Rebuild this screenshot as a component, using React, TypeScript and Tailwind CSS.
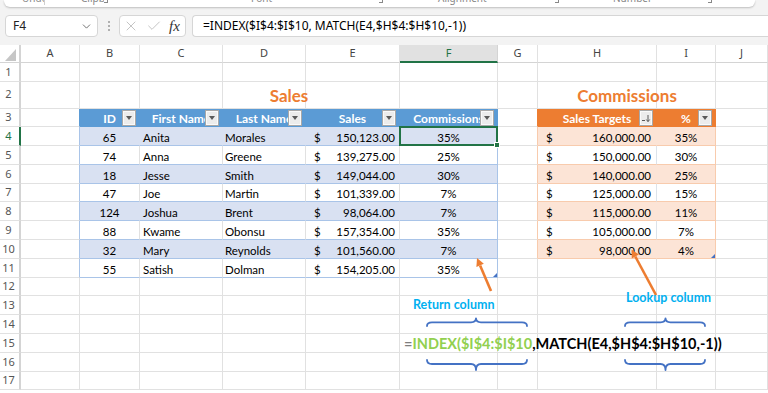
import React from "react";
import { X, Check, ChevronDown } from "lucide-react";

const LETTERS = ["", "A", "B", "C", "D", "E", "F", "G", "H", "I", "J"];
const LEFT: string[][] = [
  ["65", "Anita", "Morales", "150,123.00", "35%"],
  ["74", "Anna", "Greene", "139,275.00", "25%"],
  ["18", "Jesse", "Smith", "149,044.00", "30%"],
  ["47", "Joe", "Martin", "101,339.00", "7%"],
  ["124", "Joshua", "Brent", "98,064.00", "7%"],
  ["88", "Kwame", "Obonsu", "157,354.00", "35%"],
  ["32", "Mary", "Reynolds", "101,560.00", "7%"],
  ["55", "Satish", "Dolman", "154,205.00", "35%"],
];
const RIGHT: string[][] = [
  ["160,000.00", "35%"],
  ["150,000.00", "30%"],
  ["140,000.00", "25%"],
  ["125,000.00", "15%"],
  ["115,000.00", "11%"],
  ["105,000.00", "7%"],
  ["98,000.00", "4%"],
];
const LEFT_HDR = ["ID", "First Name", "Last Name", "Sales", "Commissions"];

function FilterBtn({ sort = false }: { sort?: boolean }) {
  return (
    <div className="absolute right-[4px] top-[2px] w-[12px] h-[14px] bg-[#ececec] border border-[#fafafa] shadow-[0_0_0_1px_#a8a8a8] flex items-center justify-center z-10">
      {sort ? (
        <svg width="10" height="10" viewBox="0 0 10 10">
          <line x1="1" y1="7.5" x2="4" y2="7.5" stroke="#595959" strokeWidth="1" />
          <line x1="7" y1="2" x2="7" y2="8.5" stroke="#595959" strokeWidth="1" />
          <path d="M5.3 6.5 L7 8.6 L8.7 6.5" fill="none" stroke="#595959" strokeWidth="1" />
        </svg>
      ) : (
        <div className="w-0 h-0 border-l-[3.5px] border-r-[3.5px] border-t-[4px] border-l-transparent border-r-transparent border-t-[#5a5a5a]" />
      )}
    </div>
  );
}

function Cell({ r, c }: { r: number; c: number }) {
  if (r === 0) {
    if (c === 0)
      return (
        <div className="flex items-end justify-end pr-[3px] pb-[1px] bg-white border-r-2 border-r-[#d4d4d4] border-b border-b-[#d4d4d4]">
          <div className="w-0 h-0 border-l-[11px] border-l-transparent border-b-[12px] border-b-[#c6c6c6]" />
        </div>
      );
    if (c === 6)
      return (
        <div className="flex items-center justify-center bg-[#e1e1e1] border-r border-r-[#d4d4d4] border-b-2 border-b-[#217346] text-[#217346] text-[11px] font-['Noto_Sans',sans-serif]">
          F
        </div>
      );
    return (
      <div className="flex items-center justify-center bg-white border-r border-r-[#e1e1e1] border-b border-b-[#d4d4d4] text-[#444] text-[11px] font-['Noto_Sans',sans-serif]">
        {LETTERS[c]}
      </div>
    );
  }
  if (c === 0) {
    if (r === 4)
      return (
        <div className="flex items-center justify-center pr-[2px] bg-white border-r-2 border-r-[#217346] border-b border-b-[#e1e1e1] text-[#217346] text-[11px] font-['Noto_Sans',sans-serif]">
          {r}
        </div>
      );
    return (
      <div className="flex items-center justify-center pr-[2px] bg-white border-r-2 border-r-[#d4d4d4] border-b border-b-[#e1e1e1] text-[#555] text-[11px] font-['Noto_Sans',sans-serif]">
        {r}
      </div>
    );
  }

  const hdrL = r === 3 && c >= 2 && c <= 6;
  const inL = r >= 4 && r <= 11 && c >= 2 && c <= 6;
  const hdrR = r === 3 && (c === 8 || c === 9);
  const inR = r >= 4 && r <= 10 && (c === 8 || c === 9);
  const band = r % 2 === 0;

  let bg = "bg-white";
  let br = "border-r-[#e1e1e1]";
  let bb = "border-b-[#e1e1e1]";
  let content: React.ReactNode = null;
  let extra: React.ReactNode = null;
  let txt = "text-black text-[11.5px]";

  if (hdrL) {
    bg = "bg-[#5b9bd5]";
    br = "border-r-[#5b9bd5]";
    bb = "border-b-[#5b9bd5]";
    txt = "text-white font-bold text-[12px]";
    content = <span className="w-full text-center">{LEFT_HDR[c - 2]}</span>;
    extra = <FilterBtn />;
  } else if (inL) {
    bg = band ? "bg-[#d9e1f2]" : "bg-white";
    bb = "border-b-[#a9c4e8]";
    br = c === 6 ? "border-r-[#a9c4e8]" : band ? "border-r-[#d9e1f2]" : "border-r-[#e1e1e1]";
    const row = LEFT[r - 4];
    if (c === 2) content = <span className="w-full text-center">{row[0]}</span>;
    if (c === 3) content = <span className="pl-[3px]">{row[1]}</span>;
    if (c === 4) content = <span className="pl-[2px]">{row[2]}</span>;
    if (c === 5)
      content = (
        <div className="w-full flex justify-between pl-[8px] pr-[4px]">
          <span>$</span>
          <span>{row[3]}</span>
        </div>
      );
    if (c === 6) content = <span className="w-full text-center">{row[4]}</span>;
    if (c === 6 && r === 4)
      extra = (
        <>
          <div className="absolute -left-[1px] -top-[1px] -right-[1px] -bottom-[1px] border-2 border-[#217346] z-20" />
          <div className="absolute -right-[3px] -bottom-[3px] w-[6px] h-[6px] bg-[#217346] border border-white z-30" />
        </>
      );
    if (c === 6 && r === 11)
      extra = (
        <div className="absolute right-0 bottom-0 w-0 h-0 border-l-[4px] border-l-transparent border-b-[4px] border-b-[#4472c4]" />
      );
  } else if (hdrR) {
    bg = "bg-[#ed7d31]";
    br = "border-r-[#ed7d31]";
    bb = "border-b-[#ed7d31]";
    txt = "text-white font-bold text-[12px]";
    content = <span className="w-full text-center">{c === 8 ? "Sales Targets" : "%"}</span>;
    extra = <FilterBtn sort={c === 8} />;
  } else if (inR) {
    bg = band ? "bg-[#fce4d6]" : "bg-white";
    bb = "border-b-[#f8cbad]";
    br = c === 9 ? "border-r-[#f8cbad]" : band ? "border-r-[#fce4d6]" : "border-r-[#dde3ea]";
    const row = RIGHT[r - 4];
    if (c === 8)
      content = (
        <div className="w-full flex justify-between pl-[8px] pr-[5px]">
          <span>$</span>
          <span>{row[0]}</span>
        </div>
      );
    if (c === 9) content = <span className="w-full text-center">{row[1]}</span>;
    if (c === 9 && r === 10)
      extra = (
        <div className="absolute right-0 bottom-0 w-0 h-0 border-l-[4px] border-l-transparent border-b-[4px] border-b-[#4472c4]" />
      );
  }

  if (c === 1 && r === 3) br = "border-r-[#5b9bd5]";
  if (c === 1 && r >= 4 && r <= 11) br = "border-r-[#a9c4e8]";
  if (c === 7 && r === 3) br = "border-r-[#ed7d31]";
  if (c === 7 && r >= 4 && r <= 10) br = "border-r-[#f8cbad]";

  if (r === 2 && c === 2)
    content = (
      <div className="relative z-10 shrink-0 w-[418px] text-center text-[17px] leading-[20px] font-bold text-[#ed7d31] pb-[2px]">
        Sales
      </div>
    );
  if (r === 2 && c === 8)
    content = (
      <div className="relative z-10 shrink-0 w-[178px] text-center text-[17px] leading-[20px] font-bold text-[#ed7d31] pb-[2px]">
        Commissions
      </div>
    );

  return (
    <div
      className={`relative flex items-end min-w-0 border-r border-b leading-[14px] whitespace-nowrap ${bg} ${br} ${bb} ${txt}`}
    >
      {content}
      {extra}
    </div>
  );
}

function Brace({ x1, x2, xm, up }: { x1: number; x2: number; xm: number; up: boolean }) {
  const ye = up ? 326 : 360;
  const yf = up ? 322.3 : 364;
  const yt = up ? 318.3 : 370;
  const d = `M ${x1} ${ye} Q ${x1} ${yf} ${x1 + 5} ${yf} L ${xm - 5} ${yf} Q ${xm} ${yf} ${xm} ${yt} Q ${xm} ${yf} ${xm + 5} ${yf} L ${x2 - 5} ${yf} Q ${x2} ${yf} ${x2} ${ye}`;
  return <path d={d} fill="none" stroke="#4472c4" strokeWidth="1.8" strokeLinecap="round" strokeLinejoin="round" />;
}

export default function App() {
  const rows = Array.from({ length: 18 }, (_, i) => i);
  const cols = Array.from({ length: 11 }, (_, i) => i);
  return (
    <div className="relative w-[768px] h-[393px] overflow-hidden bg-white font-[Lato,sans-serif]">
      {/* top ribbon + formula bar */}
      <div className="h-[45px] bg-[#f3f3f3] flex flex-col font-['Noto_Sans',sans-serif]">
        <div className="ml-[4px] w-[751px] h-[7px] bg-white rounded-b-[6px] shadow-[0_1px_2px_rgba(0,0,0,0.22)] overflow-hidden flex text-[10px] leading-[12px] text-[#888]">
          <div className="w-[40px] pl-[18px] -mt-[8px] overflow-hidden">Undo</div>
          <div className="w-px h-[5px] bg-[#cfcfcf]" />
          <div className="w-[59px] pl-[36px] -mt-[8px] overflow-hidden">Clipboard</div>
          <div className="w-[4px] h-[3px] border-r border-b border-[#888]" />
          <div className="w-[271px] pl-[143px] -mt-[8px] overflow-hidden">Font</div>
          <div className="w-[4px] h-[3px] border-r border-b border-[#888]" />
          <div className="w-[172px] pl-[55px] -mt-[8px] overflow-hidden">Alignment</div>
          <div className="w-[4px] h-[3px] border-r border-b border-[#888]" />
          <div className="w-[149px] pl-[54px] -mt-[8px] overflow-hidden">Number</div>
          <div className="w-[4px] h-[3px] border-r border-b border-[#888]" />
        </div>
        <div className="mt-[8px] h-[22px] flex items-stretch">
          <div className="ml-[5px] w-[93px] bg-white border border-[#d6d6d6] rounded-[4px] flex items-center pl-[7px] pr-[4px] text-[12px] text-[#222]">
            <span className="flex-1">F4</span>
            <ChevronDown size={13} strokeWidth={1.5} className="text-[#555]" />
          </div>
          <div className="w-[21px] flex flex-col items-center justify-center gap-[2px]">
            <div className="w-[2px] h-[2px] rounded-full bg-[#9a9a9a]" />
            <div className="w-[2px] h-[2px] rounded-full bg-[#9a9a9a]" />
            <div className="w-[2px] h-[2px] rounded-full bg-[#9a9a9a]" />
          </div>
          <div className="w-[67px] bg-white border border-[#d6d6d6] rounded-[4px] flex items-center pl-[3px] gap-[7px]">
            <X size={16} strokeWidth={1} className="text-[#a6a6a6]" />
            <Check size={16} strokeWidth={1} className="text-[#a6a6a6]" />
            <span className="font-['Liberation_Serif',serif] italic text-[15px] leading-[15px] text-[#333]">fx</span>
          </div>
          <div className="ml-[6px] flex-1 bg-white border border-r-0 border-[#d6d6d6] rounded-l-[4px] flex items-center pl-[10px] text-[12px] text-black whitespace-nowrap">
            =INDEX($I$4:$I$10, MATCH(E4,$H$4:$H$10,-1))
          </div>
        </div>
      </div>

      {/* sheet grid */}
      <div className="grid grid-cols-[21px_59px_60px_83px_83px_94px_98px_40px_119px_59px_1fr] grid-rows-[18px_18.5px_27px_repeat(15,18.8px)]">
        {rows.map((r) => cols.map((c) => <Cell key={`${r}-${c}`} r={r} c={c} />))}
      </div>

      {/* annotations */}
      <div className="absolute inset-0 pointer-events-none z-40">
        <svg className="absolute left-0 top-0" width="768" height="393" viewBox="0 0 768 393">
          <line x1="491" y1="291" x2="480.1" y2="265.4" stroke="#ed7d31" strokeWidth="2.6" />
          <polygon points="477,258 483.8,263.8 476.4,267" fill="#ed7d31" />
          <line x1="656" y1="295" x2="635.3" y2="256.5" stroke="#ed7d31" strokeWidth="2.6" />
          <polygon points="631.5,249.5 638.8,254.6 631.8,258.4" fill="#ed7d31" />
          <Brace x1={427} x2={527} xm={476} up={true} />
          <Brace x1={427} x2={527} xm={476} up={false} />
          <Brace x1={625} x2={705} xm={665.5} up={true} />
          <Brace x1={625} x2={705} xm={665.5} up={false} />
        </svg>
        <div className="absolute left-[413px] top-[297px] text-[12.5px] leading-[15px] font-bold text-[#00b0f0] whitespace-nowrap">
          Return column
        </div>
        <div className="absolute left-[626px] top-[290px] text-[12.5px] leading-[15px] font-bold text-[#00b0f0] whitespace-nowrap">
          Lookup column
        </div>
        <div className="absolute left-[404px] top-[335px] text-[14.5px] leading-[18px] font-bold whitespace-nowrap">
          <span className="text-[#7f7f7f]">=</span>
          <span className="text-[#92d050]">INDEX($I$4:$I$10</span>
          <span className="text-black">,MATCH(E4,$H$4:$H$10,-1))</span>
        </div>
      </div>
    </div>
  );
}
